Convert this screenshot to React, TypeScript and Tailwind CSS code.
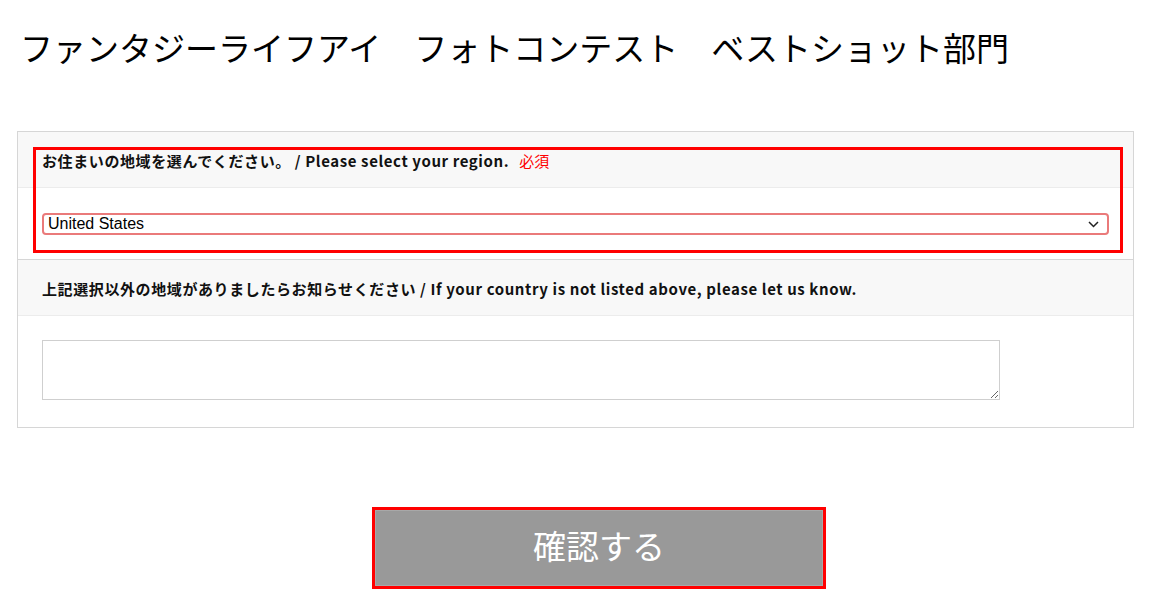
import React from "react";

const jp = { fontFamily: '"Noto Sans CJK JP", "Noto Sans", sans-serif' };

export default function App() {
  return (
    <div className="w-[1150px] h-[605px] bg-white overflow-hidden" style={jp}>
      <h1 className="pt-[22px] pl-[20px] text-[33px] leading-[50px] font-normal text-black">
        ファンタジーライフアイ　フォトコンテスト　ベストショット部門
      </h1>

      <div className="mt-[59px] ml-[17px] w-[1117px] border border-[#d6d6d6]">
        <div className="relative">
          <div className="h-[56px] bg-[#f8f8f8] border-b border-[#ececec] flex items-center pt-[3px] pl-[24px] text-[15px] font-bold tracking-[0.6px] text-[#111]">
            <span>お住まいの地域を選んでください。 / Please select your region.</span>
            <span className="ml-[10px] font-normal tracking-normal text-[#ff0000]">必須</span>
          </div>
          <div className="h-[71px] pt-[25px] pl-[24px]">
            <div className="w-[1067px] h-[22px] rounded-[4px] border-2 border-[#ea7a7a] bg-white flex items-center justify-between pl-[4px] pr-[8px]">
              <span className="text-[16px] text-black" style={{ fontFamily: '"Liberation Sans", Arial, sans-serif' }}>
                United States
              </span>
              <svg width="11" height="7" viewBox="0 0 11 7" fill="none">
                <path d="M1 1 L5.5 5.5 L10 1" stroke="#222" strokeWidth="1.5" />
              </svg>
            </div>
          </div>
          <div className="absolute left-[15px] top-[15px] w-[1090px] h-[106px] border-[3px] border-[#ff0000] pointer-events-none" />
        </div>

        <div className="h-[57px] bg-[#f8f8f8] border-t border-[#d6d6d6] border-b border-b-[#ececec] flex items-center pt-[4px] pl-[24px] text-[15px] font-bold tracking-[0.6px] text-[#111]">
          上記選択以外の地域がありましたらお知らせください / If your country is not listed above, please let us know.
        </div>
        <div className="pt-[24px] pb-[27px] pl-[24px]">
          <textarea className="block w-[958px] h-[60px] border border-[#cfcfcf] bg-white outline-none" />
        </div>
      </div>

      <div className="mt-[79px] ml-[372px] w-[454px] h-[82px] border-[3px] border-[#ff0000]">
        <div className="w-full h-full bg-[#999999] border border-[#a8a8a8] flex items-center justify-center pb-[5px] text-white text-[33px]">
          確認する
        </div>
      </div>
    </div>
  );
}
